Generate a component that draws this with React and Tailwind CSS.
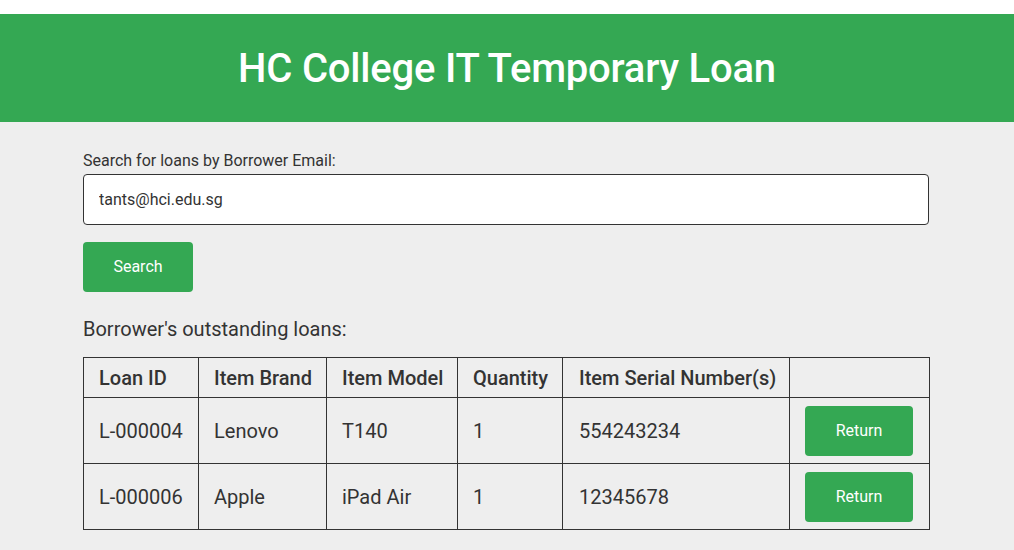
import React, { useState } from 'react';

const loans = [
  { id: 'L-000004', brand: 'Lenovo', model: 'T140', qty: 1, serials: '554243234' },
  { id: 'L-000006', brand: 'Apple', model: 'iPad Air', qty: 1, serials: '12345678' },
];

const App = () => {
  const [email, setEmail] = useState('tants@hci.edu.sg');

  return (
    <div className="min-h-[550px] bg-[#eeeeee] text-[#333333] font-['Roboto',sans-serif]">
      {/* Header */}
      <div className="h-[14px] bg-white" />
      <header className="h-[108px] bg-[#34a853] flex items-center justify-center">
        <h1 className="text-[40px] font-medium text-white leading-none tracking-[-0.2px] mt-[2px]">HC College IT Temporary Loan</h1>
      </header>

      {/* Main */}
      <main className="w-[846px] ml-[83px] pt-[29px]">
        <label className="block text-[16px] leading-[20px] mb-[3px]">Search for loans by Borrower Email:</label>
        <input
          type="text"
          value={email}
          onChange={(e) => setEmail(e.target.value)}
          className="block w-full h-[51px] px-[15px] bg-white border border-[#333333] rounded-[4px] text-[16px] text-[#333333] outline-none"
        />
        <button className="mt-[17px] w-[110px] h-[50px] bg-[#34a853] text-white text-[16px] rounded-[4px]">
          Search
        </button>

        <p className="mt-[25px] text-[20px] leading-6">Borrower's outstanding loans:</p>

        <table className="mt-[16px] w-[846px] table-fixed border-collapse text-[20px] whitespace-nowrap">
          <colgroup>
            <col className="w-[115px]" />
            <col className="w-[128px]" />
            <col className="w-[131px]" />
            <col className="w-[105px]" />
            <col className="w-[227px]" />
            <col className="w-[140px]" />
          </colgroup>
          <thead>
            <tr>
              <th className="border border-[#333333] pl-[15px] pr-4 pt-[8px] pb-[7px] text-left font-medium leading-6">Loan ID</th>
              <th className="border border-[#333333] pl-[15px] pr-4 pt-[8px] pb-[7px] text-left font-medium leading-6">Item Brand</th>
              <th className="border border-[#333333] pl-[15px] pr-4 pt-[8px] pb-[7px] text-left font-medium leading-6">Item Model</th>
              <th className="border border-[#333333] pl-[15px] pr-4 pt-[8px] pb-[7px] text-left font-medium leading-6">Quantity</th>
              <th className="border border-[#333333] pl-4 pr-4 pt-[8px] pb-[7px] text-left font-medium leading-6">Item Serial Number(s)</th>
              <th className="border border-[#333333] px-4 pt-[8px] pb-[7px]" />
            </tr>
          </thead>
          <tbody>
            {loans.map((loan) => (
              <tr key={loan.id}>
                <td className="border border-[#333333] pl-[15px] pr-4 pt-[8px] pb-[7px]">{loan.id}</td>
                <td className="border border-[#333333] pl-[15px] pr-4 pt-[8px] pb-[7px]">{loan.brand}</td>
                <td className="border border-[#333333] pl-[15px] pr-4 pt-[8px] pb-[7px]">{loan.model}</td>
                <td className="border border-[#333333] pl-[15px] pr-4 pt-[8px] pb-[7px]">{loan.qty}</td>
                <td className="border border-[#333333] pl-4 pr-4 pt-[8px] pb-[7px]">{loan.serials}</td>
                <td className="border border-[#333333] pl-[15px] pr-4 pt-[8px] pb-[7px]">
                  <button className="block w-[108px] h-[50px] bg-[#34a853] text-white text-[16px] rounded-[4px]">
                    Return
                  </button>
                </td>
              </tr>
            ))}
          </tbody>
        </table>
      </main>
    </div>
  );
};

export default App;
